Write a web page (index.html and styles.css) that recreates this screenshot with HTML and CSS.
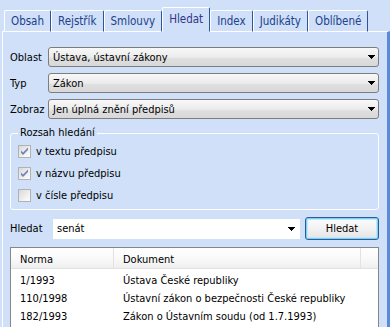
FILE: index.html
```html
<!DOCTYPE html>
<html lang="cs">
<head>
<meta charset="utf-8">
<title>Hledat</title>
<link rel="stylesheet" href="styles.css">
</head>
<body>
<div class="window">
  <div class="tabs">
    <div class="tab">Obsah</div>
    <div class="tab">Rejstřík</div>
    <div class="tab">Smlouvy</div>
    <div class="tab active">Hledat</div>
    <div class="tab">Index</div>
    <div class="tab">Judikáty</div>
    <div class="tab">Oblíbené</div>
  </div>
  <div class="panel">
    <div class="form">
      <span class="lbl">Oblast</span>
      <div class="select"><span class="val">Ústava, ústavní zákony</span><svg class="arrow" width="7" height="4" viewBox="0 0 7 4"><path d="M0 0h7v1h-1v1h-1v1h-1v1h-1v-1h-1v-1h-1v-1h-1z"/></svg></div>
      <span class="lbl">Typ</span>
      <div class="select"><span class="val">Zákon</span><svg class="arrow" width="7" height="4" viewBox="0 0 7 4"><path d="M0 0h7v1h-1v1h-1v1h-1v1h-1v-1h-1v-1h-1v-1h-1z"/></svg></div>
      <span class="lbl">Zobraz</span>
      <div class="select"><span class="val">Jen úplná znění předpisů</span><svg class="arrow" width="7" height="4" viewBox="0 0 7 4"><path d="M0 0h7v1h-1v1h-1v1h-1v1h-1v-1h-1v-1h-1v-1h-1z"/></svg></div>
    </div>
    <fieldset class="scope">
      <legend>Rozsah hledání</legend>
      <div class="check"><span class="box"><svg width="9" height="9" viewBox="0 0 9 9"><path d="M1 3.5l2 2 5-5v2.5l-5 5-2-2z"/></svg></span>v textu předpisu</div>
      <div class="check"><span class="box"><svg width="9" height="9" viewBox="0 0 9 9"><path d="M1 3.5l2 2 5-5v2.5l-5 5-2-2z"/></svg></span>v názvu předpisu</div>
      <div class="check"><span class="box"></span>v čísle předpisu</div>
    </fieldset>
    <div class="search">
      <span class="lbl">Hledat</span>
      <div class="combo"><span class="val">senát</span><svg class="arrow" width="7" height="4" viewBox="0 0 7 4"><path d="M0 0h7v1h-1v1h-1v1h-1v1h-1v-1h-1v-1h-1v-1h-1z"/></svg></div>
      <button class="btn" type="button">Hledat</button>
    </div>
    <div class="list">
      <div class="head">
        <div class="c1">Norma</div>
        <div class="c2">Dokument</div>
        <div class="c3"></div>
      </div>
      <div class="row"><div class="c1">1/1993</div><div class="c2">Ústava České republiky</div></div>
      <div class="row"><div class="c1">110/1998</div><div class="c2">Ústavní zákon o bezpečnosti České republiky</div></div>
      <div class="row"><div class="c1">182/1993</div><div class="c2">Zákon o Ústavním soudu (od 1.7.1993)</div></div>
    </div>
  </div>
</div>
</body>
</html>
```

FILE: styles.css
```css
* { box-sizing: border-box; }
html, body { margin: 0; padding: 0; }
body {
  width: 390px;
  height: 327px;
  overflow: hidden;
  background: #cfe0f8;
  font-family: "DejaVu Sans Condensed", "DejaVu Sans", sans-serif;
  font-stretch: condensed;
  font-size: 11px;
  color: #000;
}
.window { width: 390px; height: 327px; display: flex; flex-direction: column; }

.tabs {
  display: flex;
  align-items: flex-end;
  height: 32px;
  padding-left: 4px;
  position: relative;
  z-index: 1;
  margin-bottom: -1px;
}
.tab {
  height: 22px;
  padding: 3px 6px 0 6px;
  border-top: 1px solid #fff;
  border-left: 1px solid #fff;
  border-right: 1px solid #2f5498;
  border-bottom: 1px solid #fff;
  border-radius: 2px 2px 0 0;
  color: #213f8a;
  font-size: 11.5px;
  white-space: nowrap;
}
.tab.active {
  height: 25px;
  padding-top: 4px;
  border-bottom-color: #cfe0f8;
  color: #33358a;
}

.panel {
  flex: 1;
  margin-left: 2px;
  border-top: 1px solid #fff;
  border-left: 1px solid #fff;
  border-right: 3px solid #5a8bd6;
  padding: 15px 8px 0 7px;
  display: flex;
  flex-direction: column;
}

.form {
  display: grid;
  grid-template-columns: 38px 1fr;
  row-gap: 6px;
  align-items: center;
}
.lbl { white-space: nowrap; }
.select {
  height: 20px;
  border: 1px solid #7d7d7d;
  border-radius: 3px;
  background: linear-gradient(#f8f8f8, #ececec 50%, #dedede 60%, #d8d8d8);
  display: flex;
  align-items: center;
  justify-content: space-between;
  padding: 0 3px 0 4px;
}
.arrow { display: block; fill: #000; shape-rendering: crispEdges; }

.scope {
  margin: 7px 0 0 0;
  padding: 0 7px 3px 7px;
  border: 1px solid #fff;
  border-radius: 3px;
  min-inline-size: 0;
}
.scope legend {
  padding: 0 2px;
  line-height: 14px;
}
.check {
  height: 22px;
  display: flex;
  align-items: center;
  gap: 5px;
}
.box {
  width: 13px;
  height: 13px;
  border: 1px solid #b2b2b2;
  background: linear-gradient(135deg, #d8d8d8, #f4f4f4 70%, #fbfbfb);
  display: flex;
  align-items: center;
  justify-content: center;
}
.box svg { fill: #7185b9; display: block; }

.search {
  margin-top: 7px;
  display: grid;
  grid-template-columns: 38px 1fr 74px;
  column-gap: 5px;
  align-items: center;
  height: 23px;
}
.search .lbl { margin-right: -5px; }
.combo {
  height: 20px;
  background: #fff;
  display: flex;
  align-items: center;
  justify-content: space-between;
  padding: 0 5px 0 4px;
}
.btn {
  height: 23px;
  border: 1px solid #2c5c96;
  border-radius: 3px;
  background: linear-gradient(#fdfdfd, #f2f2f2 50%, #e4e4e4);
  box-shadow: inset 0 0 0 1px #7fd0f6, inset 0 0 0 2px #bfe8fa;
  font: inherit;
  color: #000;
  padding: 0;
}

.list {
  margin-top: 7px;
  flex: 1;
  border: 1px solid #828790;
  border-bottom: none;
  background: #fff;
  overflow: hidden;
}
.head {
  display: flex;
  height: 21px;
  background: linear-gradient(#ffffff, #fafafa 50%, #efefef);
  border-bottom: 1px solid #e2e2e2;
}
.head > div {
  padding: 5px 0 0 9px;
  border-right: 1px solid #e2e2e2;
}
.c1 { width: 103px; flex: none; }
.c2 { flex: 1; }
.head .c3 { width: 17px; flex: none; border-right: none; }
.row {
  display: flex;
  height: 18px;
  align-items: center;
}
.list .head + .row { margin-top: 2px; }
.row > div { padding-left: 9px; white-space: nowrap; }
```
